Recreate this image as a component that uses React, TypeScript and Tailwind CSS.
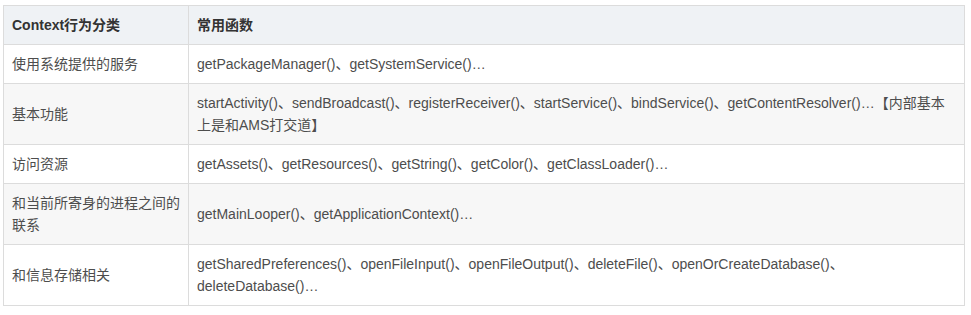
import React from "react";

const rows: { k: string; v: string; alt?: boolean }[] = [
  { k: "使用系统提供的服务", v: "getPackageManager()、getSystemService()…" },
  {
    k: "基本功能",
    v: "startActivity()、sendBroadcast()、registerReceiver()、startService()、bindService()、getContentResolver()…【内部基本上是和AMS打交道】",
    alt: true,
  },
  { k: "访问资源", v: "getAssets()、getResources()、getString()、getColor()、getClassLoader()…" },
  { k: "和当前所寄身的进程之间的联系", v: "getMainLooper()、getApplicationContext()…", alt: true },
  {
    k: "和信息存储相关",
    v: "getSharedPreferences()、openFileInput()、openFileOutput()、deleteFile()、openOrCreateDatabase()、deleteDatabase()…",
  },
];

export default function App() {
  return (
    <div
      className="w-[971px] h-[315px] bg-white pt-[5px] pl-[3px]"
      style={{ fontFamily: '"Liberation Sans", Arial, "Noto Sans CJK SC", sans-serif' }}
    >
      <table className="border-collapse w-[962px] table-fixed text-[14px] leading-[22px] text-[#4d4d4d]">
        <colgroup>
          <col className="w-[185px]" />
          <col />
        </colgroup>
        <thead>
          <tr className="bg-[#eff2f5]">
            <th className="border border-[#dcdcdc] px-2 py-2 text-left font-bold text-[#333]">Context行为分类</th>
            <th className="border border-[#dcdcdc] px-2 py-2 text-left font-bold text-[#333]">常用函数</th>
          </tr>
        </thead>
        <tbody>
          {rows.map((r, i) => (
            <tr key={i} className={r.alt ? "bg-[#f7f7f7]" : "bg-white"}>
              <td className="border border-[#dcdcdc] px-2 py-2 align-middle">{r.k}</td>
              <td className="border border-[#dcdcdc] px-2 py-2 align-middle">{r.v}</td>
            </tr>
          ))}
        </tbody>
      </table>
    </div>
  );
}
